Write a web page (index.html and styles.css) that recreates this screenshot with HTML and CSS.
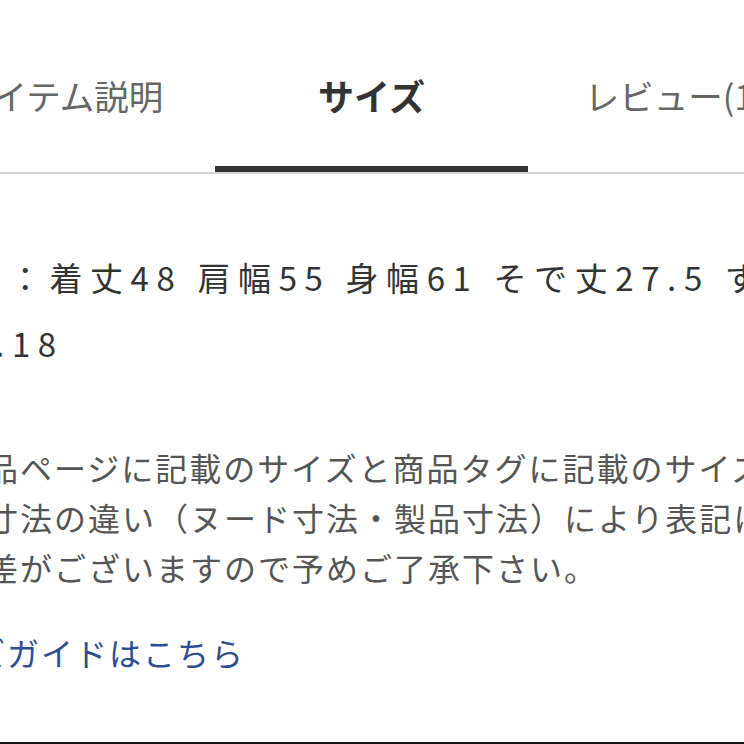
FILE: index.html
```html
<!DOCTYPE html>
<html lang="ja">
<head>
<meta charset="utf-8">
<title>サイズ</title>
<link rel="stylesheet" href="styles.css">
</head>
<body>
<div class="page">
  <nav class="tabs">
    <div class="tab tab-first">アイテム説明</div>
    <div class="tab active">サイズ</div>
    <div class="tab">レビュー(12)</div>
  </nav>
  <section class="content">
    <p class="spec">サイズ：着丈48 肩幅55 身幅61 そで丈27.5 すそ幅50<br>重さ0.18</p>
    <p class="note">商品ページに記載のサイズと商品タグに記載のサイズは、<br>寸法の違い（ヌード寸法・製品寸法）により表記に<br>差がございますので予めご了承下さい。</p>
    <a class="guide" href="#">サイズガイドはこちら</a>
  </section>
  <div class="bottom-bar"></div>
</div>
</body>
</html>
```

FILE: styles.css
```css
html, body {
  margin: 0;
  padding: 0;
}

body {
  width: 744px;
  height: 744px;
  overflow: hidden;
  background: #ffffff;
  font-family: "Noto Sans CJK JP", "Noto Sans", sans-serif;
}

.page {
  width: 744px;
  height: 744px;
  display: flex;
  flex-direction: column;
  overflow: hidden;
}

.tabs {
  flex: none;
  display: flex;
  width: 939px;
  margin-left: -98px;
  border-bottom: 2px solid #d4d4d4;
}

.tab {
  flex: 0 0 313px;
  height: 172px;
  box-sizing: border-box;
  padding-top: 75px;
  line-height: 40px;
  text-align: center;
  font-size: 34.5px;
  color: #666666;
  border-bottom: 6px solid transparent;
  white-space: nowrap;
}

.tab-first {
  padding-left: 6px;
}

.tab.active {
  font-size: 36px;
  font-weight: 700;
  color: #333333;
  border-bottom-color: #333333;
}

.content {
  flex: 1;
  display: flex;
  flex-direction: column;
  align-items: flex-start;
}

.spec {
  margin: 70px 0 0 -112px;
  font-size: 33px;
  line-height: 66px;
  letter-spacing: 7.6px;
  color: #333333;
  white-space: nowrap;
}

.note {
  margin: 66px 0 0 -14px;
  text-indent: -34px;
  font-size: 32px;
  line-height: 50px;
  letter-spacing: 2px;
  color: #555555;
  white-space: nowrap;
}

.guide {
  margin: 35px 0 0 -94px;
  font-size: 32px;
  line-height: 50px;
  letter-spacing: 2px;
  color: #2d4f8e;
  text-decoration: none;
  white-space: nowrap;
}

.bottom-bar {
  flex: none;
  height: 2px;
  background: #111111;
}
```
